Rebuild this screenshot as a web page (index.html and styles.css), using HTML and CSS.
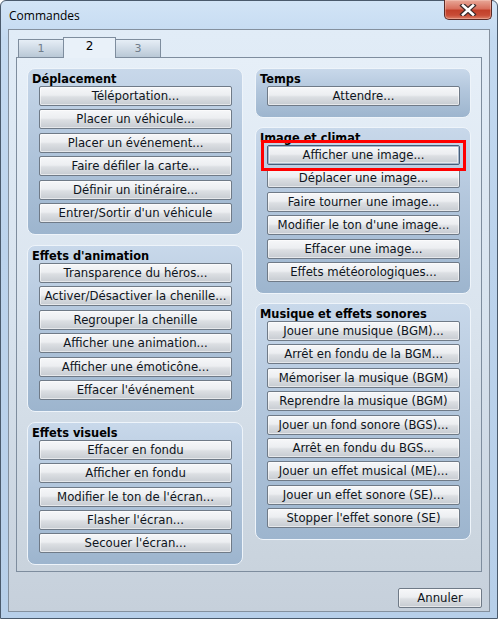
FILE: index.html
```html
<!DOCTYPE html>
<html lang="fr">
<head>
<meta charset="utf-8">
<title>Commandes</title>
<link rel="stylesheet" href="styles.css">
</head>
<body>
<div class="window">
  <div class="titlebar">
    <span class="title">Commandes</span>
    <div class="close">
      <svg width="20" height="12" viewBox="0 0 20 12">
        <path d="M5 1.5 L15 10.5 M15 1.5 L5 10.5" stroke="#3a2a2a" stroke-width="5" stroke-linecap="square" fill="none"/>
        <path d="M5 1.5 L15 10.5 M15 1.5 L5 10.5" stroke="#ffffff" stroke-width="2.6" stroke-linecap="square" fill="none"/>
      </svg>
    </div>
  </div>
  <div class="client">
    <div class="tabs">
      <div class="tab">1</div>
      <div class="tab active">2</div>
      <div class="tab">3</div>
    </div>
    <div class="panel">
      <div class="col">
        <div class="group">
          <div class="gtitle">Déplacement</div>
          <div class="btns">
            <div class="btn">Téléportation...</div>
            <div class="btn">Placer un véhicule...</div>
            <div class="btn">Placer un événement...</div>
            <div class="btn">Faire défiler la carte...</div>
            <div class="btn">Définir un itinéraire...</div>
            <div class="btn">Entrer/Sortir d'un véhicule</div>
          </div>
        </div>
        <div class="group">
          <div class="gtitle">Effets d'animation</div>
          <div class="btns">
            <div class="btn">Transparence du héros...</div>
            <div class="btn">Activer/Désactiver la chenille...</div>
            <div class="btn">Regrouper la chenille</div>
            <div class="btn">Afficher une animation...</div>
            <div class="btn">Afficher une émoticône...</div>
            <div class="btn">Effacer l'événement</div>
          </div>
        </div>
        <div class="group">
          <div class="gtitle">Effets visuels</div>
          <div class="btns">
            <div class="btn">Effacer en fondu</div>
            <div class="btn">Afficher en fondu</div>
            <div class="btn">Modifier le ton de l'écran...</div>
            <div class="btn">Flasher l'écran...</div>
            <div class="btn">Secouer l'écran...</div>
          </div>
        </div>
      </div>
      <div class="col right">
        <div class="group">
          <div class="gtitle">Temps</div>
          <div class="btns">
            <div class="btn">Attendre...</div>
          </div>
        </div>
        <div class="group">
          <div class="gtitle">Image et climat</div>
          <div class="btns">
            <div class="btn focused marked">Afficher une image...</div>
            <div class="btn">Déplacer une image...</div>
            <div class="btn">Faire tourner une image...</div>
            <div class="btn">Modifier le ton d'une image...</div>
            <div class="btn">Effacer une image...</div>
            <div class="btn">Effets météorologiques...</div>
          </div>
        </div>
        <div class="group">
          <div class="gtitle">Musique et effets sonores</div>
          <div class="btns">
            <div class="btn">Jouer une musique (BGM)...</div>
            <div class="btn">Arrêt en fondu de la BGM...</div>
            <div class="btn">Mémoriser la musique (BGM)</div>
            <div class="btn">Reprendre la musique (BGM)</div>
            <div class="btn">Jouer un fond sonore (BGS)...</div>
            <div class="btn">Arrêt en fondu du BGS...</div>
            <div class="btn">Jouer un effet musical (ME)...</div>
            <div class="btn">Jouer un effet sonore (SE)...</div>
            <div class="btn">Stopper l'effet sonore (SE)</div>
          </div>
        </div>
      </div>
    </div>
    <div class="footer">
      <div class="btn cancel">Annuler</div>
    </div>
  </div>
</div>
</body>
</html>
```

FILE: styles.css
```css
* { box-sizing: border-box; }
html, body { margin: 0; padding: 0; }
body { width: 498px; height: 619px; overflow: hidden; background: #ffffff; }

.window {
  width: 498px;
  height: 619px;
  padding: 0 7px 6px 7px;
  border: 1px solid #4a5a6c;
  border-radius: 6px 6px 0 0;
  background: linear-gradient(180deg, #d2e4f6 0%, #c4daf1 6%, #bcd3ec 40%, #b7cfe9 100%);
  display: flex;
  flex-direction: column;
}

.titlebar {
  height: 28px;
  position: relative;
  display: flex;
  align-items: flex-start;
}
.title {
  font-family: "Open Sans", "Noto Sans", sans-serif;
  font-size: 12px;
  line-height: 16px;
  color: #000;
  margin-top: 7px;
  margin-left: 1px;
}
.close {
  position: absolute;
  top: -1px;
  right: -2px;
  width: 48px;
  height: 20px;
  border: 1px solid #5a2a26;
  border-top: none;
  border-radius: 0 0 5px 5px;
  background: linear-gradient(180deg, #e8a898 0%, #d8705e 45%, #c2402a 55%, #c84c36 80%, #dc8068 100%);
  box-shadow: inset 0 0 0 1px rgba(255,220,210,0.35);
  display: flex;
  align-items: center;
  justify-content: center;
}

.client {
  flex: 1;
  border: 1px solid #84909e;
  background: linear-gradient(180deg, #e1ecf7 0%, #d8e3ee 50%, #c6d0db 100%);
  padding: 7px 7px 0 7px;
  display: flex;
  flex-direction: column;
}

.tabs {
  display: flex;
  height: 20px;
  padding-left: 2px;
  align-items: flex-end;
  position: relative;
  z-index: 1;
}
.tab {
  width: 46px;
  height: 18px;
  border: 1px solid #7e8d9e;
  border-bottom: none;
  background: linear-gradient(180deg, #e6eef6 0%, #d2dde8 45%, #b9c8d6 100%);
  font-family: "DejaVu Sans", Verdana, sans-serif;
  font-size: 11px;
  line-height: 18px;
  color: #707d8a;
  text-align: center;
  margin-right: -1px;
}
.tab.active {
  width: 53px;
  height: 21px;
  margin-bottom: -1px;
  background: #e9f1f9;
  color: #000;
  font-size: 12px;
  line-height: 16px;
  position: relative;
  z-index: 2;
}

.panel {
  width: 466px;
  height: 515px;
  border: 1px solid #7e8d9e;
  background: linear-gradient(180deg, #e6eff8 0%, #dae4ee 50%, #c9d3dd 100%);
  padding: 10px 10px 0 10px;
  display: flex;
  gap: 12px;
}

.col {
  width: 216px;
  display: flex;
  flex-direction: column;
  gap: 10px;
}
.col.right { gap: 9px; }

.group {
  border: 1px solid #eef4fa;
  border-radius: 8px;
  background: linear-gradient(180deg, #c8d8ea 0%, #b2c6dc 45%, #9db5ce 100%);
  padding: 0 10px 11px 11px;
}
.gtitle {
  font-family: "DejaVu Sans", Verdana, sans-serif;
  font-weight: bold;
  font-size: 11.4px;
  line-height: 17px;
  height: 17px;
  padding-top: 2px;
  margin-left: -7px;
  color: #000;
  white-space: nowrap;
}

.btns {
  display: flex;
  flex-direction: column;
  gap: 3.4px;
}

.btn {
  height: 20px;
  border: 1px solid #6f7a87;
  border-radius: 2px;
  background: linear-gradient(180deg, #f6f7f9 0%, #eceef1 45%, #dcdfe3 55%, #c6cbd1 100%);
  box-shadow: inset 0 0 0 1px rgba(255,255,255,0.55);
  font-family: "DejaVu Sans", Verdana, sans-serif;
  font-size: 11.7px;
  line-height: 18px;
  color: #0e1420;
  text-align: center;
  white-space: nowrap;
}
.btn.focused {
  border-color: #465e7a;
  box-shadow: inset 0 0 0 1px #a5b6ca, inset 0 0 0 2px rgba(255,255,255,0.5);
}
.btn.marked { position: relative; }
.btn.marked::after {
  content: "";
  position: absolute;
  top: -6px;
  bottom: -7px;
  left: -7px;
  right: -7px;
  border: 3px solid #ff0000;
}

.footer {
  display: flex;
  justify-content: flex-end;
  margin-top: 16px;
}
.btn.cancel {
  width: 84px;
}
```
